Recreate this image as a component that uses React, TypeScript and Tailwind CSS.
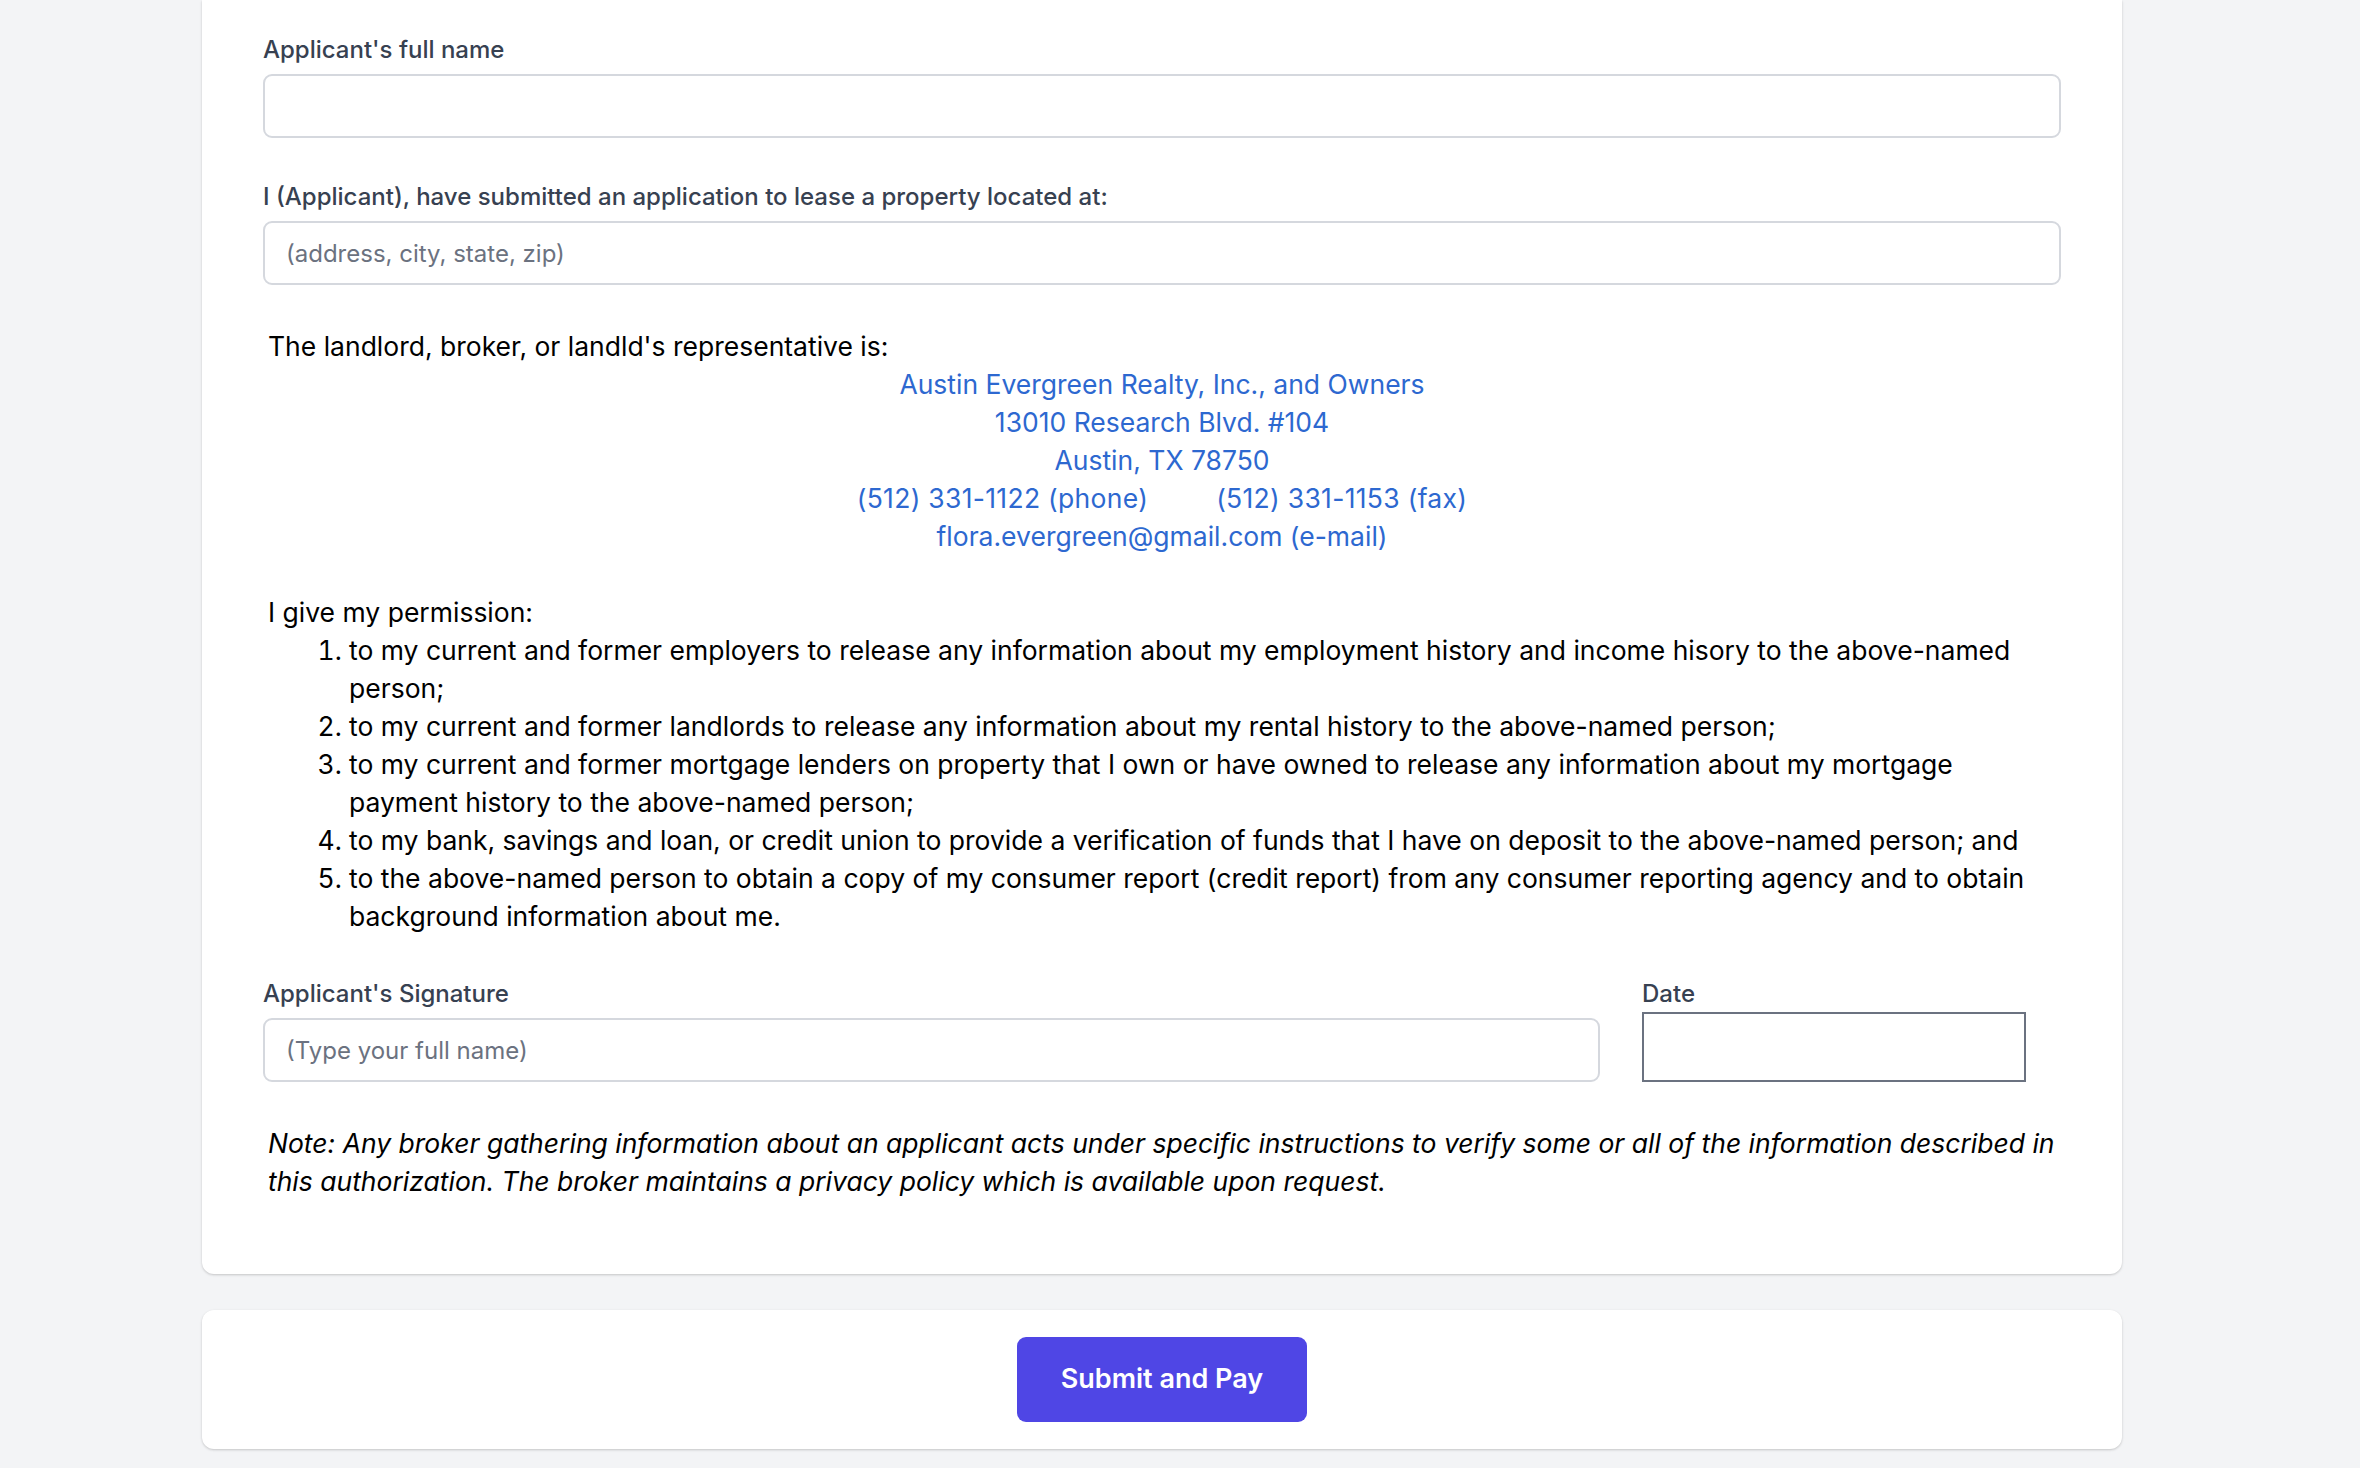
import React from 'react';

const font = "font-['Inter','Liberation_Sans',sans-serif]";

const permissions = [
  'to my current and former employers to release any information about my employment history and income hisory to the above-named person;',
  'to my current and former landlords to release any information about my rental history to the above-named person;',
  'to my current and former mortgage lenders on property that I own or have owned to release any information about my mortgage payment history to the above-named person;',
  'to my bank, savings and loan, or credit union to provide a verification of funds that I have on deposit to the above-named person; and',
  'to the above-named person to obtain a copy of my consumer report (credit report) from any consumer reporting agency and to obtain background information about me.',
];

const App: React.FC = () => {
  return (
    <div className={`min-h-screen bg-[#f3f4f6] pl-[202px] pb-[20px] ${font}`}>
      <div className="w-[1920px]">
        {/* Authorization card */}
        <div className="bg-white rounded-b-[12px] shadow-[0_1px_3px_rgba(0,0,0,0.12),0_1px_2px_rgba(0,0,0,0.08)] px-[61px] pt-[34px] pb-[74px]">
          <label className="block text-[24px] leading-[32px] font-medium text-[#374151]">
            Applicant's full name
          </label>
          <input
            type="text"
            className="mt-[8px] block w-full h-[64px] rounded-[9px] border-2 border-[#d5d8de] px-[21px] text-[24px] outline-none"
          />

          <label className="block mt-[43px] text-[24px] leading-[32px] font-medium text-[#374151]">
            I (Applicant), have submitted an application to lease a property located at:
          </label>
          <input
            type="text"
            placeholder="(address, city, state, zip)"
            className="mt-[8px] block w-full h-[64px] rounded-[9px] border-2 border-[#d5d8de] px-[21px] text-[24px] text-[#111827] placeholder:text-[#6b7280] outline-none"
          />

          <div className="mt-[42px] px-[5px] text-[26.5px] leading-[38px] text-black">
            <p>The landlord, broker, or landld's representative is:</p>
            <div className="text-center text-[#2d68d0]">
              <p>Austin Evergreen Realty, Inc., and Owners</p>
              <p>13010 Research Blvd. #104</p>
              <p>Austin, TX 78750</p>
              <p>
                <span className="tracking-[0.3px]">(512) 331-1122 (phone)</span>
                <span className="ml-[68px] tracking-[0.3px]">(512) 331-1153 (fax)</span>
              </p>
              <p>flora.evergreen@gmail.com (e-mail)</p>
            </div>

            <p className="mt-[38px]">I give my permission:</p>
            <ol className="list-decimal pl-[81px]">
              {permissions.map((item, i) => (
                <li key={i}>{item}</li>
              ))}
            </ol>
          </div>

          <div className="mt-[43px] flex items-end gap-[42px]">
            <div className="w-[1337px]">
              <label className="block text-[24px] leading-[32px] font-medium text-[#374151]">
                Applicant's Signature
              </label>
              <input
                type="text"
                placeholder="(Type your full name)"
                className="mt-[8px] block w-full h-[64px] rounded-[9px] border-2 border-[#d5d8de] px-[21px] text-[24px] placeholder:text-[#6b7280] outline-none"
              />
            </div>
            <div className="flex-1">
              <label className="block text-[24px] leading-[32px] font-medium text-[#374151]">
                Date
              </label>
              <input
                type="text"
                className="mt-[2px] block w-[384px] h-[70px] border-2 border-[#6b7280] px-[12px] text-[24px] outline-none"
              />
            </div>
          </div>

          <p className="mt-[42px] px-[5px] text-[26.5px] leading-[38px] italic text-black">
            Note: Any broker gathering information about an applicant acts under specific instructions to verify some or
            all of the information described in this authorization. The broker maintains a privacy policy which is
            available upon request.
          </p>
        </div>

        {/* Submit card */}
        <div className="mt-[36px] bg-white rounded-[12px] shadow-[0_1px_3px_rgba(0,0,0,0.12),0_1px_2px_rgba(0,0,0,0.08)] py-[27px] flex justify-center">
          <button
            type="button"
            className="h-[85px] w-[290px] rounded-[9px] bg-[#4f46e5] text-white text-[27px] font-semibold"
          >
            Submit and Pay
          </button>
        </div>
      </div>
    </div>
  );
};

export default App;
